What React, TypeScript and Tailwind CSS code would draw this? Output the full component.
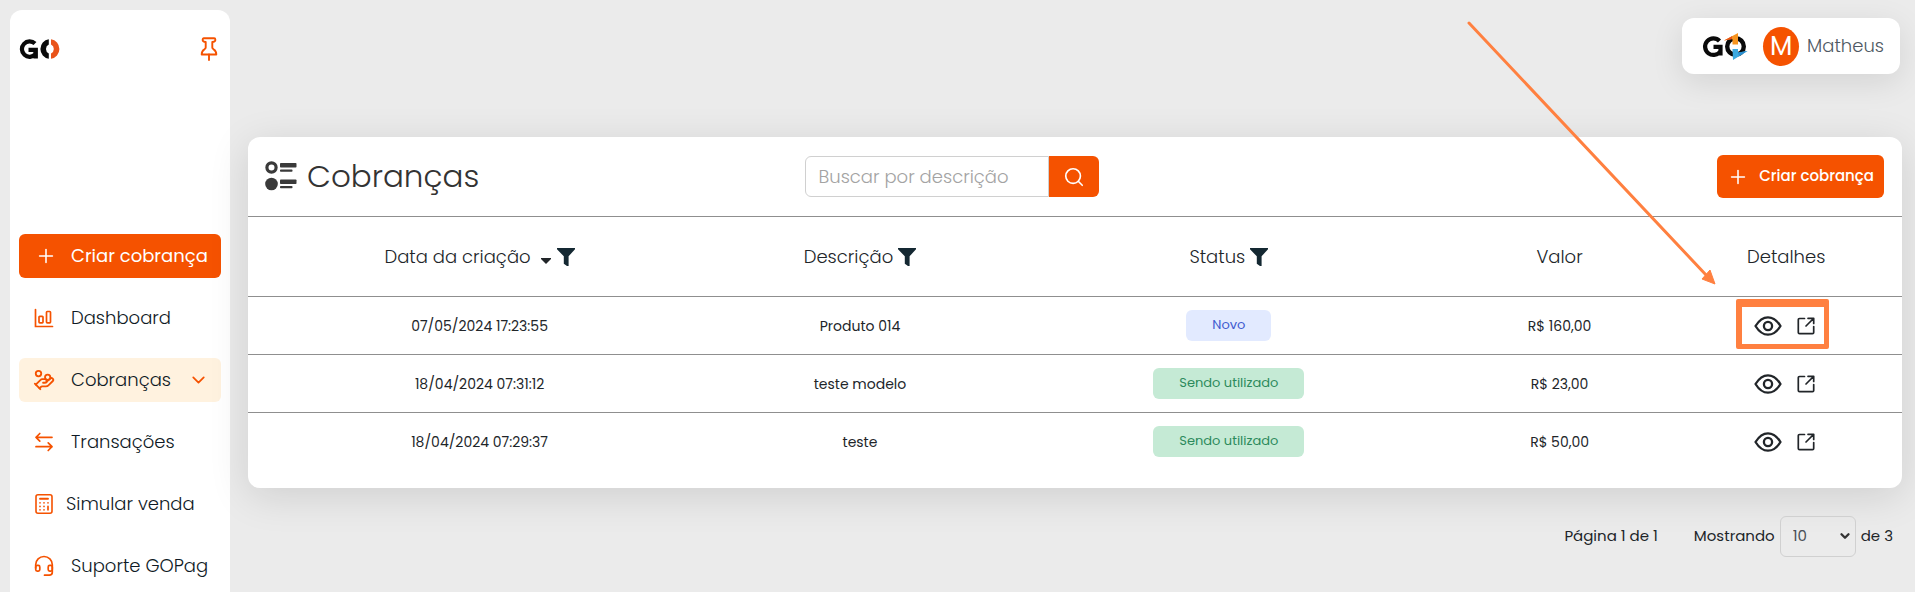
import type { ReactNode } from 'react';
import { ChevronDown, HandCoins, Plus, Search } from 'lucide-react';

function GoLogo() {
  return (
    <svg viewBox="0 0 42 20" className="h-5 w-[42px]" role="img" aria-label="GO">
      <path d="M16 4.600A7.700 7.700 0 1 0 16.400 15.200V10.800H9.500M16.800 8.800V19.500" fill="none" stroke="#0a0a0a" strokeWidth="4.200" />
      <path d="M29.800 .3A9.800 9.800 0 0 0 29.800 19.700V14.500A5 5 0 0 1 29.800 5.500Z" fill="#0a0a0a" />
      <path d="M32 .3A9.800 9.800 0 0 1 32 19.700V14.500A5 5 0 0 0 32 5.500Z" fill="#e9541a" />
    </svg>
  );
}

function GoColorLogo() {
  return (
    <svg viewBox="0 0 48 28" className="h-7 w-12" role="img" aria-label="GO">
      <path d="M18.500 9A8.300 8.300 0 1 0 19.500 19V14.800H12.500M19.500 12.700V23.500" fill="none" stroke="#0a0a0a" strokeWidth="4.200" />
      <circle cx="34.500" cy="14.500" r="8.300" fill="none" stroke="#0a0a0a" strokeWidth="4.400" />
      <path d="M31.500 4V12.500H37V1L23 8.500L31.500 7Z" fill="#f7941e" />
      <path d="M23 8.500L31 4.200V7Z" fill="#e9541a" />
      <path d="M31.500 17H37V20.500L46.500 19L32 28Z" fill="#3ba9e0" />
      <path d="M37 20.500L46.500 19L38 24Z" fill="#2a8fd0" />
    </svg>
  );
}

function PinIcon() {
  return (
    <svg viewBox="0 0 18 24" className="h-6 w-[18px]" fill="none" stroke="#f55200" strokeWidth="1.900" strokeLinejoin="round" strokeLinecap="round" aria-hidden="true">
      <path d="M3.800 1.300H14.200Q15.300 1.300 15.300 2.400V3.200Q15.300 4.600 12.300 5V10.500Q12.300 11.500 13.600 12.300Q16.300 13.800 16.300 17.500H1.700Q1.700 13.800 4.400 12.300Q5.700 11.500 5.700 10.500V5Q2.700 4.600 2.700 3.200V2.400Q2.700 1.300 3.800 1.300Z" />
      <path d="M9 17.500V23" />
    </svg>
  );
}

function ChartIcon() {
  return (
    <svg viewBox="0 0 20 20" className="size-5" fill="none" stroke="#f55200" strokeWidth="1.700" strokeLinecap="round" aria-hidden="true">
      <path d="M1.500 1.500V18.500H18.500" />
      <rect x="5" y="8.300" width="4" height="6.500" rx=".8" />
      <rect x="12.500" y="3.500" width="4" height="11.300" rx=".8" />
    </svg>
  );
}

function TransferIcon() {
  return (
    <svg viewBox="0 0 20 20" className="size-5" fill="none" stroke="#f55200" strokeWidth="1.700" strokeLinecap="round" strokeLinejoin="round" aria-hidden="true">
      <path d="M18 5.300H2M5.800 1.500L2 5.300L5.800 9.100M2 14.700H18M14.200 10.900L18 14.700L14.200 18.500" />
    </svg>
  );
}

function CalculatorIcon() {
  return (
    <svg viewBox="0 0 20 22" className="h-[22px] w-5" fill="none" stroke="#f55200" strokeWidth="1.600" strokeLinecap="round" aria-hidden="true">
      <rect x="2" y="1.800" width="16" height="18.400" rx="2" />
      <path d="M6 5.800H14" strokeWidth="1.900" />
      <path d="M6 9.800H6.010M10 9.800H10.010M14 9.800H14.010M6 13.400H6.010M10 13.400H10.010M6 16.800H6.010M10 16.800H10.010M14 13.400V16.800" strokeWidth="1.700" />
    </svg>
  );
}

function HeadsetIcon() {
  return (
    <svg viewBox="0 0 20 22" className="h-[22px] w-5" fill="none" stroke="#f55200" strokeWidth="1.700" strokeLinecap="round" strokeLinejoin="round" aria-hidden="true">
      <path d="M1.700 13V9.800A8.300 8.300 0 0 1 18.300 9.800V17.300Q18.300 20.200 15.300 20.200H10.500" />
      <path d="M1.700 12Q1.700 10.400 3.200 10.400H4.300Q5.800 10.400 5.800 12V14.600Q5.800 16.200 4.300 16.200H3.200Q1.700 16.200 1.700 14.600ZM18.300 12Q18.300 10.400 16.800 10.400H15.700Q14.200 10.400 14.200 12V14.600Q14.200 16.200 15.700 16.200H16.800Q18.300 16.200 18.300 14.600Z" />
    </svg>
  );
}

function ListIcon() {
  return (
    <svg viewBox="0 0 32 30" className="h-[30px] w-8" fill="#3a3a3a" aria-hidden="true">
      <circle cx="6.500" cy="6.500" r="4.600" fill="none" stroke="#3a3a3a" strokeWidth="3.200" />
      <circle cx="6.500" cy="23" r="6.300" />
      <rect x="15" y="2" width="16.500" height="4.500" rx=".8" />
      <rect x="15" y="8.500" width="12.500" height="2.300" rx=".8" />
      <rect x="15" y="18.500" width="16.500" height="4.500" rx=".8" />
      <rect x="15" y="25" width="12.500" height="2.300" rx=".8" />
    </svg>
  );
}

function FunnelIcon() {
  return (
    <svg viewBox="0 0 18 18" className="size-[18px]" fill="#142832" aria-hidden="true">
      <path d="M0 0H18V1.200L11.600 8.300V18H10L6.800 15.800V8.300L0 1.200Z" />
    </svg>
  );
}

function EyeIcon() {
  return (
    <svg viewBox="0 0 28 20" className="h-5 w-7" fill="none" stroke="#212529" strokeWidth="2.300" aria-hidden="true">
      <path d="M1.500 10C5 4.300 9 1.300 14 1.300S23 4.300 26.500 10C23 15.700 19 18.700 14 18.700S5 15.700 1.500 10Z" strokeLinejoin="round" />
      <circle cx="14" cy="10" r="4.100" />
    </svg>
  );
}

function OpenIcon() {
  return (
    <svg viewBox="0 0 18 18" className="size-[18px]" fill="none" stroke="#212529" strokeWidth="1.700" strokeLinecap="round" strokeLinejoin="round" aria-hidden="true">
      <path d="M7.500 1.500H2.500Q1.300 1.500 1.300 2.700V15.500Q1.300 16.700 2.500 16.700H15.500Q16.700 16.700 16.700 15.500V9.500" />
      <path d="M11 1.300H16.700V6.500M16.500 1.500L9 9" />
    </svg>
  );
}

function NavItem({ icon, label, active = false, tight = false }: { icon: ReactNode; label: string; active?: boolean; tight?: boolean }) {
  return (
    <a
      href="#"
      aria-current={active ? 'page' : undefined}
      className={`flex h-11 items-center rounded-md pl-[15px] text-lg font-light text-[#0f1a25] ${tight ? 'gap-3' : 'gap-[17px]'} ${active ? 'bg-[#fff2df]' : ''}`}
    >
      <span className="flex w-5 shrink-0 justify-center">{icon}</span>
      <span className="whitespace-nowrap">{label}</span>
      {active && <ChevronDown className="mr-3 ml-auto size-6 text-[#f55200]" strokeWidth={2} />}
    </a>
  );
}

function Sidebar() {
  return (
    <aside className="flex w-[220px] shrink-0 flex-col rounded-t-xl bg-white px-[9px] pt-[27px]">
      <div className="flex items-center justify-between pr-[3px]">
        <GoLogo />
        <button type="button" aria-label="Fixar menu">
          <PinIcon />
        </button>
      </div>
      <nav className="mt-[173px] flex flex-col gap-[18px]" aria-label="Menu principal">
        <button type="button" className="flex h-11 items-center gap-3.5 rounded-md bg-[#f55200] pl-4 text-lg whitespace-nowrap text-white">
          <Plus className="size-[22px] shrink-0" strokeWidth={1.7} />
          Criar cobrança
        </button>
        <NavItem icon={<ChartIcon />} label="Dashboard" />
        <NavItem icon={<HandCoins className="size-[22px] shrink-0 text-[#f55200]" />} label="Cobranças" active />
        <NavItem icon={<TransferIcon />} label="Transações" />
        <NavItem icon={<CalculatorIcon />} label="Simular venda" tight />
        <NavItem icon={<HeadsetIcon />} label="Suporte GOPag" />
      </nav>
    </aside>
  );
}

const charges = [
  { date: '07/05/2024 17:23:55', description: 'Produto 014', status: 'Novo', value: 'R$ 160,00' },
  { date: '18/04/2024 07:31:12', description: 'teste modelo', status: 'Sendo utilizado', value: 'R$ 23,00' },
  { date: '18/04/2024 07:29:37', description: 'teste', status: 'Sendo utilizado', value: 'R$ 50,00' },
];

function FilterButton({ column }: { column: string }) {
  return (
    <button type="button" aria-label={`Filtrar ${column}`}>
      <FunnelIcon />
    </button>
  );
}

function ChargesTable() {
  return (
    <table className="w-full table-fixed border-collapse text-center text-[#212529]">
      <colgroup>
        <col className="w-[28%]" />
        <col className="w-[18%]" />
        <col className="w-[26.6%]" />
        <col className="w-[13.4%]" />
        <col className="w-[14%]" />
      </colgroup>
      <thead>
        <tr className="h-20 border-y border-[#8f8f8f] text-lg">
          <th scope="col" className="p-0 font-light">
            <div className="flex items-center justify-center">
              Data da criação
              <button type="button" aria-label="Ordenar por data" className="mt-2 mr-1.5 ml-2.5">
                <svg viewBox="0 0 10 6" className="h-1.5 w-2.5" fill="#212529" aria-hidden="true">
                  <path d="M0 0H10V1L5 6L0 1Z" />
                </svg>
              </button>
              <FilterButton column="data" />
            </div>
          </th>
          <th scope="col" className="p-0 font-light">
            <div className="flex items-center justify-center gap-[5px]">
              Descrição
              <FilterButton column="descrição" />
            </div>
          </th>
          <th scope="col" className="p-0 font-light">
            <div className="flex items-center justify-center gap-[5px]">
              Status
              <FilterButton column="status" />
            </div>
          </th>
          <th scope="col" className="p-0 font-light">Valor</th>
          <th scope="col" className="p-0 font-light">Detalhes</th>
        </tr>
      </thead>
      <tbody>
        {charges.map((charge, index) => (
          <tr key={charge.date} className="h-[58px] border-b border-[#8f8f8f] text-sm last:border-b-0">
            <td className="p-0">{charge.date}</td>
            <td className="p-0">{charge.description}</td>
            <td className="p-0">
              <span
                className={`inline-flex h-[31px] items-center rounded-md px-[26px] align-middle text-[13px] ${
                  charge.status === 'Novo' ? 'bg-[#e2eaff] text-[#3f5bd0]' : 'bg-[#c5ead5] text-[#2c8a5c]'
                }`}
              >
                {charge.status}
              </span>
            </td>
            <td className="p-0">{charge.value}</td>
            <td className="p-0">
              <div className="relative mx-auto flex h-[50px] w-[101px] items-center justify-center gap-[15px] pr-1">
                <button type="button" aria-label={`Ver ${charge.description}`}>
                  <EyeIcon />
                </button>
                <button type="button" aria-label={`Abrir ${charge.description}`}>
                  <OpenIcon />
                </button>
                {index === 0 && (
                  <div className="pointer-events-none absolute -top-0.5 right-2 bottom-0.5 left-0 rounded-xs border-t-8 border-r-[5px] border-b-[5px] border-l-[6px] border-[#ff8040]" />
                )}
              </div>
            </td>
          </tr>
        ))}
      </tbody>
    </table>
  );
}

export default function App() {
  return (
    <div className="relative flex min-h-screen gap-[18px] overflow-hidden bg-[#ebebeb] pt-2.5 pl-2.5 font-['Poppins','Inter',sans-serif]">
      <Sidebar />
      <main className="flex min-w-0 flex-1 flex-col pt-2 pr-[13px]">
        <header className="mr-0.5 flex h-14 items-center self-end rounded-xl bg-white pr-4 pl-[19px] shadow-[0_8px_32px_rgba(0,0,0,0.10)]">
          <GoColorLogo />
          <span className="ml-3.5 flex h-[39px] w-9 items-center justify-center rounded-[50%] bg-[#f55200] text-[26px] text-white">M</span>
          <span className="ml-2 text-lg font-light text-[#4f5963]">Matheus</span>
        </header>

        <section className="mt-[63px] rounded-xl bg-white pb-[17px] shadow-[0_8px_40px_rgba(0,0,0,0.12)]">
          <div className="grid h-[79px] grid-cols-[1fr_auto_1fr] items-center pr-[18px] pl-[17px]">
            <div className="flex items-center gap-2.5 pb-0.5">
              <ListIcon />
              <h1 className="text-[31px] leading-10 font-light text-[#333]">Cobranças</h1>
            </div>
            <form className="mr-[246px] flex h-[41px]" role="search" onSubmit={(e) => e.preventDefault()}>
              <input
                type="search"
                aria-label="Buscar por descrição"
                placeholder="Buscar por descrição"
                className="w-[244px] rounded-l-md border border-[#d0d0d0] bg-white px-[13px] text-lg font-light placeholder:text-[#a3a3a3]"
              />
              <button type="submit" aria-label="Buscar" className="flex w-[50px] items-center justify-center rounded-r-md bg-[#f55200] text-white">
                <Search className="size-[22px]" strokeWidth={1.8} />
              </button>
            </form>
            <button type="button" className="flex h-[43px] items-center gap-2.5 justify-self-end rounded-md bg-[#f55200] px-2.5 text-[15px] font-medium whitespace-nowrap text-white">
              <Plus className="size-[22px] shrink-0" strokeWidth={1.7} />
              Criar cobrança
            </button>
          </div>
          <ChargesTable />
        </section>

        <footer className="mt-7 flex h-[41px] items-center justify-end pr-[9px] text-[15px] text-[#212529]">
          <span>Página 1 de 1</span>
          <label htmlFor="page-size" className="mr-[5px] ml-9">Mostrando</label>
          <span className="relative flex items-center">
            <select id="page-size" defaultValue="10" className="h-[41px] w-[76px] appearance-none rounded-md border border-[#d0d0d0] bg-transparent px-3 text-[15px] text-[#495057]">
              <option>10</option>
              <option>25</option>
              <option>50</option>
            </select>
            <ChevronDown className="pointer-events-none absolute right-1 size-3.5 text-[#333]" strokeWidth={4} />
          </span>
          <span className="ml-[5px]">de 3</span>
        </footer>
      </main>

      <svg viewBox="0 0 250 268" className="pointer-events-none absolute top-5 right-[198px] h-[268px] w-[250px]" fill="#ff8040" aria-hidden="true">
        <path d="M2 3L240 256" stroke="#ff8040" strokeWidth="3" strokeLinecap="round" />
        <path d="M248 264L235 259L243 250Z" stroke="#ff8040" strokeLinejoin="round" />
      </svg>
    </div>
  );
}
